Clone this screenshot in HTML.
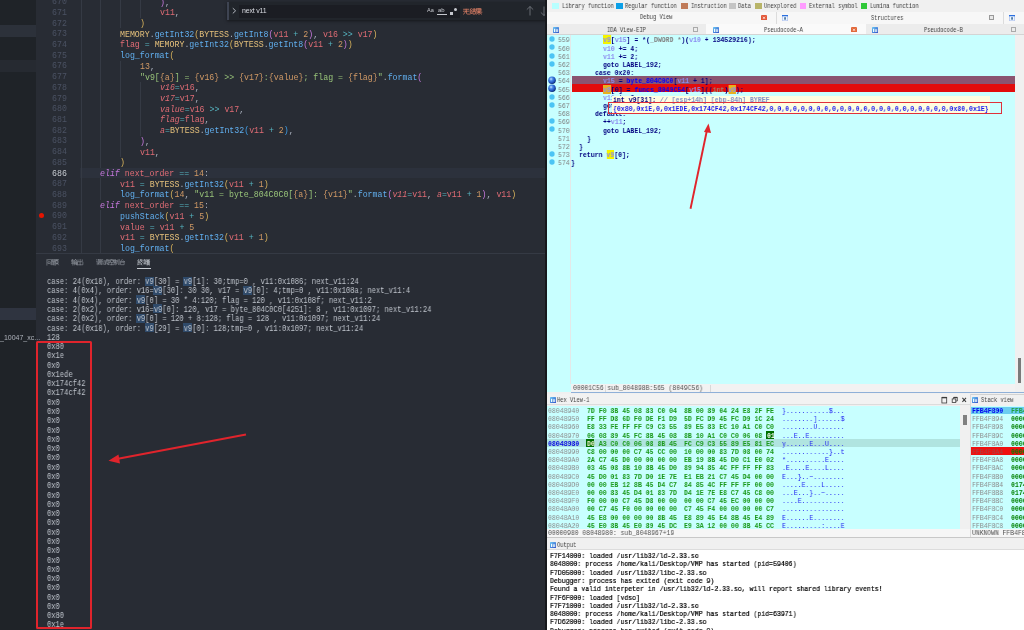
<!DOCTYPE html><html><head><meta charset="utf-8"><style>
*{margin:0;padding:0;box-sizing:border-box}
html,body{width:1024px;height:630px;overflow:hidden;background:#282c34}
body{position:relative;font-family:"Liberation Mono",monospace;-webkit-font-smoothing:antialiased}
.ln{will-change:transform}
.a{position:absolute}
.ln{position:absolute;white-space:pre;line-height:1}
.vc{font-size:8.25px;color:#abb2bf}
.it{font-style:italic}
.term{font-size:8.4px;color:#bfc4cc;transform:scaleX(0.85);transform-origin:0 0}
.ida{font-size:8px;color:#000080;transform:scaleX(0.815);transform-origin:0 0;font-weight:bold}
.nb{font-weight:normal}
.st{font-size:7px;color:#505050;transform:scaleX(0.91);transform-origin:0 0}
.lg{font-size:6.86px;color:#404040;transform:scaleX(0.787);transform-origin:0 0}
</style></head><body>
<div class="a" style="left:0;top:0;width:36px;height:630px;background:#1f2328"></div>
<div class="a" style="left:0;top:25px;width:36px;height:12px;background:#2c313a"></div>
<div class="a" style="left:0;top:60px;width:36px;height:12px;background:#262a31"></div>
<div class="a" style="left:0;top:308px;width:36px;height:11.5px;background:#2f3440"></div>
<div class="ln" style="left:0;top:334px;font-family:'Liberation Sans';font-size:7px;color:#aeb3bb">_10047_xc...</div>
<div class="a" style="left:36px;top:0;width:511px;height:253px;background:#282c34"></div>
<div class="a" style="left:80px;top:167.66px;width:467px;height:10.7px;background:#2c313c"></div>
<div class="a" style="left:80.6px;top:-3.76px;width:1px;height:10.81px;background:#353a44"></div>
<div class="a" style="left:100.4px;top:-3.76px;width:1px;height:10.81px;background:#353a44"></div>
<div class="a" style="left:120.2px;top:-3.76px;width:1px;height:10.81px;background:#353a44"></div>
<div class="a" style="left:140.0px;top:-3.76px;width:1px;height:10.81px;background:#353a44"></div>
<div class="a" style="left:80.6px;top:6.96px;width:1px;height:10.81px;background:#353a44"></div>
<div class="a" style="left:100.4px;top:6.96px;width:1px;height:10.81px;background:#353a44"></div>
<div class="a" style="left:120.2px;top:6.96px;width:1px;height:10.81px;background:#353a44"></div>
<div class="a" style="left:140.0px;top:6.96px;width:1px;height:10.81px;background:#353a44"></div>
<div class="a" style="left:80.6px;top:17.67px;width:1px;height:10.81px;background:#353a44"></div>
<div class="a" style="left:100.4px;top:17.67px;width:1px;height:10.81px;background:#353a44"></div>
<div class="a" style="left:120.2px;top:17.67px;width:1px;height:10.81px;background:#353a44"></div>
<div class="a" style="left:80.6px;top:28.38px;width:1px;height:10.81px;background:#353a44"></div>
<div class="a" style="left:100.4px;top:28.38px;width:1px;height:10.81px;background:#353a44"></div>
<div class="a" style="left:80.6px;top:39.09px;width:1px;height:10.81px;background:#353a44"></div>
<div class="a" style="left:100.4px;top:39.09px;width:1px;height:10.81px;background:#353a44"></div>
<div class="a" style="left:80.6px;top:49.80px;width:1px;height:10.81px;background:#353a44"></div>
<div class="a" style="left:100.4px;top:49.80px;width:1px;height:10.81px;background:#353a44"></div>
<div class="a" style="left:80.6px;top:60.50px;width:1px;height:10.81px;background:#353a44"></div>
<div class="a" style="left:100.4px;top:60.50px;width:1px;height:10.81px;background:#353a44"></div>
<div class="a" style="left:120.2px;top:60.50px;width:1px;height:10.81px;background:#353a44"></div>
<div class="a" style="left:80.6px;top:71.21px;width:1px;height:10.81px;background:#353a44"></div>
<div class="a" style="left:100.4px;top:71.21px;width:1px;height:10.81px;background:#353a44"></div>
<div class="a" style="left:120.2px;top:71.21px;width:1px;height:10.81px;background:#353a44"></div>
<div class="a" style="left:80.6px;top:81.92px;width:1px;height:10.81px;background:#353a44"></div>
<div class="a" style="left:100.4px;top:81.92px;width:1px;height:10.81px;background:#353a44"></div>
<div class="a" style="left:120.2px;top:81.92px;width:1px;height:10.81px;background:#353a44"></div>
<div class="a" style="left:140.0px;top:81.92px;width:1px;height:10.81px;background:#353a44"></div>
<div class="a" style="left:80.6px;top:92.64px;width:1px;height:10.81px;background:#353a44"></div>
<div class="a" style="left:100.4px;top:92.64px;width:1px;height:10.81px;background:#353a44"></div>
<div class="a" style="left:120.2px;top:92.64px;width:1px;height:10.81px;background:#353a44"></div>
<div class="a" style="left:140.0px;top:92.64px;width:1px;height:10.81px;background:#353a44"></div>
<div class="a" style="left:80.6px;top:103.34px;width:1px;height:10.81px;background:#353a44"></div>
<div class="a" style="left:100.4px;top:103.34px;width:1px;height:10.81px;background:#353a44"></div>
<div class="a" style="left:120.2px;top:103.34px;width:1px;height:10.81px;background:#353a44"></div>
<div class="a" style="left:140.0px;top:103.34px;width:1px;height:10.81px;background:#353a44"></div>
<div class="a" style="left:80.6px;top:114.05px;width:1px;height:10.81px;background:#353a44"></div>
<div class="a" style="left:100.4px;top:114.05px;width:1px;height:10.81px;background:#353a44"></div>
<div class="a" style="left:120.2px;top:114.05px;width:1px;height:10.81px;background:#353a44"></div>
<div class="a" style="left:140.0px;top:114.05px;width:1px;height:10.81px;background:#353a44"></div>
<div class="a" style="left:80.6px;top:124.77px;width:1px;height:10.81px;background:#353a44"></div>
<div class="a" style="left:100.4px;top:124.77px;width:1px;height:10.81px;background:#353a44"></div>
<div class="a" style="left:120.2px;top:124.77px;width:1px;height:10.81px;background:#353a44"></div>
<div class="a" style="left:140.0px;top:124.77px;width:1px;height:10.81px;background:#353a44"></div>
<div class="a" style="left:80.6px;top:135.48px;width:1px;height:10.81px;background:#353a44"></div>
<div class="a" style="left:100.4px;top:135.48px;width:1px;height:10.81px;background:#353a44"></div>
<div class="a" style="left:120.2px;top:135.48px;width:1px;height:10.81px;background:#353a44"></div>
<div class="a" style="left:80.6px;top:146.19px;width:1px;height:10.81px;background:#353a44"></div>
<div class="a" style="left:100.4px;top:146.19px;width:1px;height:10.81px;background:#353a44"></div>
<div class="a" style="left:120.2px;top:146.19px;width:1px;height:10.81px;background:#353a44"></div>
<div class="a" style="left:80.6px;top:156.90px;width:1px;height:10.81px;background:#353a44"></div>
<div class="a" style="left:100.4px;top:156.90px;width:1px;height:10.81px;background:#353a44"></div>
<div class="a" style="left:80.6px;top:167.61px;width:1px;height:10.81px;background:#353a44"></div>
<div class="a" style="left:80.6px;top:178.32px;width:1px;height:10.81px;background:#353a44"></div>
<div class="a" style="left:100.4px;top:178.32px;width:1px;height:10.81px;background:#353a44"></div>
<div class="a" style="left:80.6px;top:189.03px;width:1px;height:10.81px;background:#353a44"></div>
<div class="a" style="left:100.4px;top:189.03px;width:1px;height:10.81px;background:#353a44"></div>
<div class="a" style="left:80.6px;top:199.74px;width:1px;height:10.81px;background:#353a44"></div>
<div class="a" style="left:80.6px;top:210.45px;width:1px;height:10.81px;background:#353a44"></div>
<div class="a" style="left:100.4px;top:210.45px;width:1px;height:10.81px;background:#353a44"></div>
<div class="a" style="left:80.6px;top:221.16px;width:1px;height:10.81px;background:#353a44"></div>
<div class="a" style="left:100.4px;top:221.16px;width:1px;height:10.81px;background:#353a44"></div>
<div class="a" style="left:80.6px;top:231.87px;width:1px;height:10.81px;background:#353a44"></div>
<div class="a" style="left:100.4px;top:231.87px;width:1px;height:10.81px;background:#353a44"></div>
<div class="a" style="left:80.6px;top:242.58px;width:1px;height:10.81px;background:#353a44"></div>
<div class="a" style="left:100.4px;top:242.58px;width:1px;height:10.81px;background:#353a44"></div>
<div class="ln vc" style="right:957.5px;top:-1.80px;color:#4b5263">670</div>
<div class="ln vc" style="right:957.5px;top:8.91px;color:#4b5263">671</div>
<div class="ln vc" style="right:957.5px;top:19.62px;color:#4b5263">672</div>
<div class="ln vc" style="right:957.5px;top:30.33px;color:#4b5263">673</div>
<div class="ln vc" style="right:957.5px;top:41.04px;color:#4b5263">674</div>
<div class="ln vc" style="right:957.5px;top:51.75px;color:#4b5263">675</div>
<div class="ln vc" style="right:957.5px;top:62.46px;color:#4b5263">676</div>
<div class="ln vc" style="right:957.5px;top:73.17px;color:#4b5263">677</div>
<div class="ln vc" style="right:957.5px;top:83.88px;color:#4b5263">678</div>
<div class="ln vc" style="right:957.5px;top:94.59px;color:#4b5263">679</div>
<div class="ln vc" style="right:957.5px;top:105.30px;color:#4b5263">680</div>
<div class="ln vc" style="right:957.5px;top:116.01px;color:#4b5263">681</div>
<div class="ln vc" style="right:957.5px;top:126.72px;color:#4b5263">682</div>
<div class="ln vc" style="right:957.5px;top:137.43px;color:#4b5263">683</div>
<div class="ln vc" style="right:957.5px;top:148.14px;color:#4b5263">684</div>
<div class="ln vc" style="right:957.5px;top:158.85px;color:#4b5263">685</div>
<div class="ln vc" style="right:957.5px;top:169.56px;color:#c8ccd2">686</div>
<div class="ln vc" style="right:957.5px;top:180.27px;color:#4b5263">687</div>
<div class="ln vc" style="right:957.5px;top:190.98px;color:#4b5263">688</div>
<div class="ln vc" style="right:957.5px;top:201.69px;color:#4b5263">689</div>
<div class="ln vc" style="right:957.5px;top:212.40px;color:#4b5263">690</div>
<div class="ln vc" style="right:957.5px;top:223.11px;color:#4b5263">691</div>
<div class="ln vc" style="right:957.5px;top:233.82px;color:#4b5263">692</div>
<div class="ln vc" style="right:957.5px;top:244.53px;color:#4b5263">693</div>
<div class="ln vc" style="left:159.80px;top:-1.40px"><span style="color:#c678dd">)</span><span style="color:#abb2bf">,</span></div>
<div class="ln vc" style="left:159.80px;top:9.31px"><span style="color:#e06c75">v11</span><span style="color:#abb2bf">,</span></div>
<div class="ln vc" style="left:140.00px;top:20.02px"><span style="color:#d8b35c">)</span></div>
<div class="ln vc" style="left:120.20px;top:30.73px"><span style="color:#e5c07b">MEMORY</span><span style="color:#abb2bf">.</span><span style="color:#61afef">getInt32</span><span style="color:#d8b35c">(</span><span style="color:#e5c07b">BYTESS</span><span style="color:#abb2bf">.</span><span style="color:#61afef">getInt8</span><span style="color:#c678dd">(</span><span style="color:#e06c75">v11</span><span style="color:#56b6c2"> + </span><span style="color:#d19a66">2</span><span style="color:#c678dd">)</span><span style="color:#abb2bf">, </span><span style="color:#e06c75">v16</span><span style="color:#56b6c2"> &gt;&gt; </span><span style="color:#e06c75">v17</span><span style="color:#d8b35c">)</span></div>
<div class="ln vc" style="left:120.20px;top:41.44px"><span style="color:#e06c75">flag</span><span style="color:#56b6c2"> = </span><span style="color:#e5c07b">MEMORY</span><span style="color:#abb2bf">.</span><span style="color:#61afef">getInt32</span><span style="color:#d8b35c">(</span><span style="color:#e5c07b">BYTESS</span><span style="color:#abb2bf">.</span><span style="color:#61afef">getInt8</span><span style="color:#c678dd">(</span><span style="color:#e06c75">v11</span><span style="color:#56b6c2"> + </span><span style="color:#d19a66">2</span><span style="color:#c678dd">)</span><span style="color:#d8b35c">)</span></div>
<div class="ln vc" style="left:120.20px;top:52.15px"><span style="color:#61afef">log_format</span><span style="color:#d8b35c">(</span></div>
<div class="ln vc" style="left:140.00px;top:62.86px"><span style="color:#d19a66">13</span><span style="color:#abb2bf">,</span></div>
<div class="ln vc" style="left:140.00px;top:73.57px"><span style="color:#98c379">&quot;v9[</span><span style="color:#d19a66">{a}</span><span style="color:#98c379">] = </span><span style="color:#d19a66">{v16}</span><span style="color:#98c379"> &gt;&gt; </span><span style="color:#d19a66">{v17}</span><span style="color:#98c379">:</span><span style="color:#d19a66">{value}</span><span style="color:#98c379">; flag = </span><span style="color:#d19a66">{flag}</span><span style="color:#98c379">&quot;</span><span style="color:#abb2bf">.</span><span style="color:#61afef">format</span><span style="color:#c678dd">(</span></div>
<div class="ln vc" style="left:159.80px;top:84.28px"><span style="color:#e06c75;font-style:italic">v16</span><span style="color:#56b6c2">=</span><span style="color:#e06c75">v16</span><span style="color:#abb2bf">,</span></div>
<div class="ln vc" style="left:159.80px;top:94.99px"><span style="color:#e06c75;font-style:italic">v17</span><span style="color:#56b6c2">=</span><span style="color:#e06c75">v17</span><span style="color:#abb2bf">,</span></div>
<div class="ln vc" style="left:159.80px;top:105.70px"><span style="color:#e06c75;font-style:italic">value</span><span style="color:#56b6c2">=</span><span style="color:#e06c75">v16</span><span style="color:#56b6c2"> &gt;&gt; </span><span style="color:#e06c75">v17</span><span style="color:#abb2bf">,</span></div>
<div class="ln vc" style="left:159.80px;top:116.41px"><span style="color:#e06c75;font-style:italic">flag</span><span style="color:#56b6c2">=</span><span style="color:#e06c75">flag</span><span style="color:#abb2bf">,</span></div>
<div class="ln vc" style="left:159.80px;top:127.12px"><span style="color:#e06c75;font-style:italic">a</span><span style="color:#56b6c2">=</span><span style="color:#e5c07b">BYTESS</span><span style="color:#abb2bf">.</span><span style="color:#61afef">getInt32</span><span style="color:#3d9ee8">(</span><span style="color:#e06c75">v11</span><span style="color:#56b6c2"> + </span><span style="color:#d19a66">2</span><span style="color:#3d9ee8">)</span><span style="color:#abb2bf">,</span></div>
<div class="ln vc" style="left:140.00px;top:137.83px"><span style="color:#c678dd">)</span><span style="color:#abb2bf">,</span></div>
<div class="ln vc" style="left:140.00px;top:148.54px"><span style="color:#e06c75">v11</span><span style="color:#abb2bf">,</span></div>
<div class="ln vc" style="left:120.20px;top:159.25px"><span style="color:#d8b35c">)</span></div>
<div class="ln vc" style="left:100.40px;top:169.96px"><span style="color:#c678dd;font-style:italic">elif</span><span style="color:#abb2bf"> </span><span style="color:#e06c75">next_order</span><span style="color:#56b6c2"> == </span><span style="color:#d19a66">14</span><span style="color:#abb2bf">:</span></div>
<div class="ln vc" style="left:120.20px;top:180.67px"><span style="color:#e06c75">v11</span><span style="color:#56b6c2"> = </span><span style="color:#e5c07b">BYTESS</span><span style="color:#abb2bf">.</span><span style="color:#61afef">getInt32</span><span style="color:#d8b35c">(</span><span style="color:#e06c75">v11</span><span style="color:#56b6c2"> + </span><span style="color:#d19a66">1</span><span style="color:#d8b35c">)</span></div>
<div class="ln vc" style="left:120.20px;top:191.38px"><span style="color:#61afef">log_format</span><span style="color:#d8b35c">(</span><span style="color:#d19a66">14</span><span style="color:#abb2bf">, </span><span style="color:#98c379">&quot;v11 = byte_804C0C0[</span><span style="color:#d19a66">{a}</span><span style="color:#98c379">]: </span><span style="color:#d19a66">{v11}</span><span style="color:#98c379">&quot;</span><span style="color:#abb2bf">.</span><span style="color:#61afef">format</span><span style="color:#c678dd">(</span><span style="color:#e06c75;font-style:italic">v11</span><span style="color:#56b6c2">=</span><span style="color:#e06c75">v11</span><span style="color:#abb2bf">, </span><span style="color:#e06c75;font-style:italic">a</span><span style="color:#56b6c2">=</span><span style="color:#e06c75">v11</span><span style="color:#56b6c2"> + </span><span style="color:#d19a66">1</span><span style="color:#c678dd">)</span><span style="color:#abb2bf">, </span><span style="color:#e06c75">v11</span><span style="color:#d8b35c">)</span></div>
<div class="ln vc" style="left:100.40px;top:202.09px"><span style="color:#c678dd;font-style:italic">elif</span><span style="color:#abb2bf"> </span><span style="color:#e06c75">next_order</span><span style="color:#56b6c2"> == </span><span style="color:#d19a66">15</span><span style="color:#abb2bf">:</span></div>
<div class="ln vc" style="left:120.20px;top:212.80px"><span style="color:#61afef">pushStack</span><span style="color:#d8b35c">(</span><span style="color:#e06c75">v11</span><span style="color:#56b6c2"> + </span><span style="color:#d19a66">5</span><span style="color:#d8b35c">)</span></div>
<div class="ln vc" style="left:120.20px;top:223.51px"><span style="color:#e06c75">value</span><span style="color:#56b6c2"> = </span><span style="color:#e06c75">v11</span><span style="color:#56b6c2"> + </span><span style="color:#d19a66">5</span></div>
<div class="ln vc" style="left:120.20px;top:234.22px"><span style="color:#e06c75">v11</span><span style="color:#56b6c2"> = </span><span style="color:#e5c07b">BYTESS</span><span style="color:#abb2bf">.</span><span style="color:#61afef">getInt32</span><span style="color:#d8b35c">(</span><span style="color:#e06c75">v11</span><span style="color:#56b6c2"> + </span><span style="color:#d19a66">1</span><span style="color:#d8b35c">)</span></div>
<div class="ln vc" style="left:120.20px;top:244.93px"><span style="color:#61afef">log_format</span><span style="color:#d8b35c">(</span></div>
<div class="a" style="left:38.5px;top:213.2px;width:5px;height:5px;border-radius:50%;background:#e51400"></div>
<div class="a" style="left:227px;top:1.5px;width:320px;height:18.5px;background:#21252b;box-shadow:0 1px 3px rgba(0,0,0,.5)"></div>
<div class="a" style="left:227px;top:1.5px;width:2px;height:18.5px;background:#3e4452"></div>
<svg class="a" style="left:231px;top:7px" width="7" height="8"><polyline points="1.8,1.2 4.6,3.8 1.8,6.4" fill="none" stroke="#c0c4cc" stroke-width="0.9"/></svg>
<div class="a" style="left:239px;top:4.5px;width:221px;height:13px;background:#1b1d23"></div>
<div class="ln" style="left:242px;top:7px;font-family:'Liberation Sans';font-size:7px;color:#d7dae0;letter-spacing:-0.2px">next v11</div>
<div class="ln" style="left:427px;top:8px;font-family:'Liberation Sans';font-size:5.5px;color:#c5c8ce">Aa</div>
<div class="ln" style="left:437.5px;top:7px;font-family:'Liberation Sans';font-size:6px;color:#c5c8ce">ab</div>
<div class="a" style="left:437px;top:14px;width:10px;height:0.8px;background:#c5c8ce"></div>
<div class="a" style="left:450px;top:12px;width:2.5px;height:2.5px;background:#c5c8ce"></div><div class="a" style="left:454px;top:8px;width:3px;height:3px;background:#c5c8ce;border-radius:50%"></div>
<svg class="a" style="left:462.8px;top:7.6px;opacity:1" width="21.2" height="7.4" viewBox="0 0 33.13 11.56"><g fill="none" stroke="#d27a62" stroke-width="1.25" stroke-linecap="square"><path transform="translate(0.00,0)" d="M1,2H9M0.5,5H9.5M5,2V5M4.6,5L1,9.6M5.6,5V9Q5.6,9.6 9.6,9.6"/><path transform="translate(10.00,0)" d="M3,0.5L1,3.5L3.5,3.5L1,7L4,6M1,9.3L4,8.3M5,2H9.8M7.4,0.3V4.5M5.5,4.5H9.3M5.5,6V9.5H9.3V6Z"/><path transform="translate(20.00,0)" d="M2,0.5H8V5H2ZM2,2.75H8M5,0.5V5M0.5,6.5H9.5M5,5V10M5,6.5L1,9.5M5,6.5L9,9.5"/></g></svg>
<svg class="a" style="left:525px;top:5px" width="24" height="12"><path d="M5,1.5V10.5M1.8,4.6L5,1.5L8.2,4.6M19,1.5V10.5M15.8,7.4L19,10.5L22.2,7.4" fill="none" stroke="#7d8189" stroke-width="0.75"/></svg>
<div class="a" style="left:36px;top:253px;width:511px;height:1px;background:#353a44"></div>
<svg class="a" style="left:46px;top:258.7px;opacity:1" width="14.6" height="7.1" viewBox="0 0 23.93 11.64"><g fill="none" stroke="#8f949c" stroke-width="1.0" stroke-linecap="square"><path transform="translate(0.00,0)" d="M1.3,0.3L2.5,1.8M1.5,2.5V10M3.5,1H9V9.5L8,9M4,4.5H7V7.5H4Z"/><path transform="translate(10.33,0)" d="M0.5,0.5H4.5V4H0.5ZM0.5,2.25H4.5M0,5H5M2.5,5V9M2.5,7H4.5M1,6.5L0.5,9.5Q4,9.5 5,9.8M5.5,1H10M7.5,1L7,2.5M6,2.5H9.5V7.5H6ZM7.75,2.5V7.5M7,7.5L5.5,9.5M8.5,7.5L10,9.5"/></g></svg>
<svg class="a" style="left:71px;top:258.7px;opacity:1" width="14.2" height="7.1" viewBox="0 0 23.28 11.64"><g fill="none" stroke="#8f949c" stroke-width="1.0" stroke-linecap="square"><path transform="translate(0.00,0)" d="M0.5,2H4.5M2.5,0.5L1,5H4.5M3,3V10M0.5,7H4.5M7.5,0.5L5,3.5M7.5,0.5L10,3.5M6.5,3.5H8.5M5.5,5V9.5M5.5,5H8V9M5.5,7H8M9,5V9M10,4.5V10"/><path transform="translate(10.00,0)" d="M5,0.5V9.5M1.5,1.5V4.5H8.5V1.5M0.5,5.5V9.5H9.5V5.5"/></g></svg>
<svg class="a" style="left:96px;top:258.7px;opacity:1" width="31.2" height="7.0" viewBox="0 0 52.08 11.67"><g fill="none" stroke="#8f949c" stroke-width="1.0" stroke-linecap="square"><path transform="translate(0.00,0)" d="M1,0.5L2,1.5M0.5,3.5H2V9L3,8M4,1V8L3.5,9.5M4,1H9.5V9.5L8.5,9M5,3H8.5M6.75,2V5M5.5,4.5H8M5.5,6H8V8.5H5.5Z"/><path transform="translate(9.75,0)" d="M1,0.5L2,1.5M0.5,3.5H2V9L3,8M4,3H10M8,0.5Q8.3,7 10,9.5M9,0.5L9.7,1.5M4.5,5H7.5M6,5V8.5M4,9L7.5,8"/><path transform="translate(19.50,0)" d="M0.5,3H3.5M2,0.5V9.5L1,9M0.5,7L3.5,5.5M6.75,0.2V1.2M4,3V1.2H9.5V3M5.5,2.5L4.5,4.5M8,2.5L9.5,4.5M5,6H8.5M6.75,6V9.5M4,9.5H9.5"/><path transform="translate(29.25,0)" d="M1,1L0.5,2.5M0.5,2.5H6M3,0.5V9.5M0,4.5H6.5M1,6V9M1,6H5V8.5M7.5,1.5V7.5M9.5,0.5V9.5L8.5,9"/><path transform="translate(39.00,0)" d="M5,0.5L1.5,4.5H8.5M7,3L8.5,4.5M2,6V9.5H8V6Z"/></g></svg>
<svg class="a" style="left:137px;top:258.7px;opacity:1" width="15.0" height="7.1" viewBox="0 0 24.59 11.64"><g fill="none" stroke="#d0d4da" stroke-width="1.0" stroke-linecap="square"><path transform="translate(0.00,0)" d="M3,0.5L1,3.5L3.5,3.5L1,7L4,6M1,9.3L4,8.3M6.5,0.5L4.5,3.5M6,1.5H9L5,6M6.5,3L10,6M6.5,7L7.5,7.5M6,8.5L8,9.5"/><path transform="translate(10.66,0)" d="M2,0.5V1.5M0.5,2H4M1,3.5L1.5,7M3.5,3.5L3,7M0.5,8H4.5M7.5,0.5V2.5M5.5,1V2.5H9.5V1M5,4H10M6,5V10M6,5H9.5V10M7,6V9M8.5,6V9"/></g></svg>
<div class="a" style="left:137px;top:268px;width:14px;height:1px;background:#c8ccd2"></div>
<div class="a" style="left:144.64px;top:276.60px;width:9.16px;height:9px;background:#2f4a6a"></div>
<div class="a" style="left:183.16px;top:276.60px;width:9.16px;height:9px;background:#2f4a6a"></div>
<div class="ln term" style="left:46.5px;top:278.10px">case: 24(0x18), order: v9[30] = v9[1]: 30;tmp=0 , v11:0x1086; next_v11:24</div>
<div class="a" style="left:153.20px;top:285.88px;width:9.16px;height:9px;background:#2f4a6a"></div>
<div class="a" style="left:243.08px;top:285.88px;width:9.16px;height:9px;background:#2f4a6a"></div>
<div class="ln term" style="left:46.5px;top:287.38px">case: 4(0x4), order: v16=v9[30]: 30 30, v17 = v9[0]: 4;tmp=0 , v11:0x108a; next_v11:4</div>
<div class="a" style="left:136.08px;top:295.16px;width:9.16px;height:9px;background:#2f4a6a"></div>
<div class="ln term" style="left:46.5px;top:296.66px">case: 4(0x4), order: v9[0] = 30 * 4:120; flag = 120 , v11:0x108f; next_v11:2</div>
<div class="a" style="left:153.20px;top:304.44px;width:9.16px;height:9px;background:#2f4a6a"></div>
<div class="ln term" style="left:46.5px;top:305.94px">case: 2(0x2), order: v16=v9[0]: 120, v17 = byte_804C0C0[4251]: 8 , v11:0x1097; next_v11:24</div>
<div class="a" style="left:136.08px;top:313.72px;width:9.16px;height:9px;background:#2f4a6a"></div>
<div class="ln term" style="left:46.5px;top:315.22px">case: 2(0x2), order: v9[0] = 120 + 8:128; flag = 128 , v11:0x1097; next_v11:24</div>
<div class="a" style="left:144.64px;top:323.00px;width:9.16px;height:9px;background:#2f4a6a"></div>
<div class="a" style="left:183.16px;top:323.00px;width:9.16px;height:9px;background:#2f4a6a"></div>
<div class="ln term" style="left:46.5px;top:324.50px">case: 24(0x18), order: v9[29] = v9[0]: 128;tmp=0 , v11:0x1097; next_v11:24</div>
<div class="ln term" style="left:46.5px;top:333.78px">128</div>
<div class="ln term" style="left:46.5px;top:343.06px">0x80</div>
<div class="ln term" style="left:46.5px;top:352.34px">0x1e</div>
<div class="ln term" style="left:46.5px;top:361.62px">0x0</div>
<div class="ln term" style="left:46.5px;top:370.90px">0x1ede</div>
<div class="ln term" style="left:46.5px;top:380.18px">0x174cf42</div>
<div class="ln term" style="left:46.5px;top:389.46px">0x174cf42</div>
<div class="ln term" style="left:46.5px;top:398.74px">0x0</div>
<div class="ln term" style="left:46.5px;top:408.02px">0x0</div>
<div class="ln term" style="left:46.5px;top:417.30px">0x0</div>
<div class="ln term" style="left:46.5px;top:426.58px">0x0</div>
<div class="ln term" style="left:46.5px;top:435.86px">0x0</div>
<div class="ln term" style="left:46.5px;top:445.14px">0x0</div>
<div class="ln term" style="left:46.5px;top:454.42px">0x0</div>
<div class="ln term" style="left:46.5px;top:463.70px">0x0</div>
<div class="ln term" style="left:46.5px;top:472.98px">0x0</div>
<div class="ln term" style="left:46.5px;top:482.26px">0x0</div>
<div class="ln term" style="left:46.5px;top:491.54px">0x0</div>
<div class="ln term" style="left:46.5px;top:500.82px">0x0</div>
<div class="ln term" style="left:46.5px;top:510.10px">0x0</div>
<div class="ln term" style="left:46.5px;top:519.38px">0x0</div>
<div class="ln term" style="left:46.5px;top:528.66px">0x0</div>
<div class="ln term" style="left:46.5px;top:537.94px">0x0</div>
<div class="ln term" style="left:46.5px;top:547.22px">0x0</div>
<div class="ln term" style="left:46.5px;top:556.50px">0x0</div>
<div class="ln term" style="left:46.5px;top:565.78px">0x0</div>
<div class="ln term" style="left:46.5px;top:575.06px">0x0</div>
<div class="ln term" style="left:46.5px;top:584.34px">0x0</div>
<div class="ln term" style="left:46.5px;top:593.62px">0x0</div>
<div class="ln term" style="left:46.5px;top:602.90px">0x0</div>
<div class="ln term" style="left:46.5px;top:612.18px">0x80</div>
<div class="ln term" style="left:46.5px;top:621.46px">0x1e</div>
<div class="a" style="left:36px;top:340.8px;width:56px;height:288.5px;border:2px solid #e0242c;border-radius:1.5px"></div>
<svg class="a" style="left:0;top:0" width="547" height="630"><line x1="246" y1="434.5" x2="114" y2="459.5" stroke="#e0242c" stroke-width="2.1"/><polygon points="108.5,460.8 118.5,454.6 120,463.6" fill="#e0242c"/></svg>
<div class="a" style="left:545px;top:0;width:2px;height:630px;background:#16181c"></div>
<div class="a" style="left:547px;top:0;width:477px;height:630px;background:#f0f0f0"></div>
<div class="a" style="left:552.3px;top:2.6px;width:6.5px;height:6px;background:#b8ffff"></div>
<div class="ln lg" style="left:561.5px;top:3px">Library function</div>
<div class="a" style="left:616px;top:2.6px;width:6.5px;height:6px;background:#0ca0e8"></div>
<div class="ln lg" style="left:625.2px;top:3px">Regular function</div>
<div class="a" style="left:681.3px;top:2.6px;width:6.5px;height:6px;background:#c07a58"></div>
<div class="ln lg" style="left:690.5px;top:3px">Instruction</div>
<div class="a" style="left:729px;top:2.6px;width:6.5px;height:6px;background:#c4c4c4"></div>
<div class="ln lg" style="left:738.2px;top:3px">Data</div>
<div class="a" style="left:755px;top:2.6px;width:6.5px;height:6px;background:#b8b468"></div>
<div class="ln lg" style="left:764.2px;top:3px">Unexplored</div>
<div class="a" style="left:799.7px;top:2.6px;width:6.5px;height:6px;background:#ff9cff"></div>
<div class="ln lg" style="left:808.9px;top:3px">External symbol</div>
<div class="a" style="left:860.9px;top:2.6px;width:6.5px;height:6px;background:#30c838"></div>
<div class="ln lg" style="left:870.1px;top:3px">Lumina function</div>
<div class="a" style="left:547px;top:11.8px;width:477px;height:11.8px;background:#f7f7f7"></div>
<div class="ln lg" style="left:640px;top:14.1px">Debug View</div>
<svg class="a" style="left:761px;top:14.7px" width="6" height="5.5"><rect x="0" y="0" width="6" height="5.5" rx="1" fill="#e2583a"/><path d="M2,1.8L4,3.8M4,1.8L2,3.8" stroke="#fde8e0" stroke-width="0.9"/></svg>
<div class="a" style="left:775.5px;top:11.8px;width:1px;height:11.8px;background:#dcdcdc"></div>
<svg class="a" style="left:781.5px;top:15.0px" width="6" height="6"><rect x="0" y="0" width="6" height="6" rx="0.6" fill="#b8c8f0"/><rect x="0" y="0" width="6" height="1.3" fill="#2a70e0"/><rect x="0.9" y="1.5" width="4.2" height="3.8" fill="#eaf8ff"/><rect x="2.2" y="2.2" width="1.7" height="2.5" fill="#4a70a0"/></svg>
<div class="ln lg" style="left:871px;top:15px;">Structures</div>
<div class="a" style="left:989px;top:15.3px;width:5px;height:5px;border:1px solid #999;background:#e8e8e8"></div>
<div class="a" style="left:1003px;top:11.8px;width:1px;height:11.8px;background:#dcdcdc"></div>
<svg class="a" style="left:1009.0px;top:15.0px" width="6" height="6"><rect x="0" y="0" width="6" height="6" rx="0.6" fill="#b8c8f0"/><rect x="0" y="0" width="6" height="1.3" fill="#2a70e0"/><rect x="0.9" y="1.5" width="4.2" height="3.8" fill="#eaf8ff"/><rect x="2.2" y="2.2" width="1.7" height="2.5" fill="#4a70a0"/></svg>
<div class="a" style="left:547px;top:23.6px;width:477px;height:11px;background:#ececec"></div>
<div class="a" style="left:705.5px;top:23.6px;width:160px;height:11px;background:#fafafa"></div>
<div class="a" style="left:547px;top:34px;width:477px;height:1px;background:#d4d4d4"></div>
<svg class="a" style="left:553.0px;top:26.5px" width="6" height="6"><defs><linearGradient id="ig" x1="0" y1="0" x2="1" y2="1"><stop offset="0" stop-color="#6cc8f4"/><stop offset="1" stop-color="#3050c8"/></linearGradient></defs><rect x="0" y="0" width="6" height="6" rx="0.6" fill="url(#ig)"/><rect x="1" y="1.8" width="1.2" height="3.2" fill="#f0ffff"/><rect x="2.8" y="2.2" width="2.4" height="2.8" fill="#c0d8f0"/></svg>
<div class="ln lg" style="left:607px;top:26.5px;">IDA View-EIP</div>
<div class="a" style="left:692.5px;top:26.8px;width:5px;height:5px;border:1px solid #aaa"></div>
<svg class="a" style="left:712.5px;top:26.5px" width="6" height="6"><defs><linearGradient id="ig" x1="0" y1="0" x2="1" y2="1"><stop offset="0" stop-color="#6cc8f4"/><stop offset="1" stop-color="#3050c8"/></linearGradient></defs><rect x="0" y="0" width="6" height="6" rx="0.6" fill="url(#ig)"/><rect x="1" y="1.8" width="1.2" height="3.2" fill="#f0ffff"/><rect x="2.8" y="2.2" width="2.4" height="2.8" fill="#c0d8f0"/></svg>
<div class="ln lg" style="left:764px;top:26.5px;">Pseudocode-A</div>
<svg class="a" style="left:851px;top:26.5px" width="6" height="5.5"><rect x="0" y="0" width="6" height="5.5" rx="1" fill="#e2683a"/><path d="M2,1.8L4,3.8M4,1.8L2,3.8" stroke="#fde8e0" stroke-width="0.9"/></svg>
<svg class="a" style="left:871.5px;top:26.5px" width="6" height="6"><defs><linearGradient id="ig" x1="0" y1="0" x2="1" y2="1"><stop offset="0" stop-color="#6cc8f4"/><stop offset="1" stop-color="#3050c8"/></linearGradient></defs><rect x="0" y="0" width="6" height="6" rx="0.6" fill="url(#ig)"/><rect x="1" y="1.8" width="1.2" height="3.2" fill="#f0ffff"/><rect x="2.8" y="2.2" width="2.4" height="2.8" fill="#c0d8f0"/></svg>
<div class="ln lg" style="left:924px;top:26.5px;">Pseudocode-B</div>
<div class="a" style="left:1010.5px;top:26.8px;width:5px;height:5px;border:1px solid #aaa"></div>
<div class="a" style="left:547px;top:35px;width:467.5px;height:349px;background:#c8ffff"></div>
<div class="a" style="left:570.2px;top:35px;width:1.3px;height:349px;background:#e4e8e8"></div>
<div class="a" style="left:1014.5px;top:35px;width:9.5px;height:357px;background:#f0f0f0"></div>
<div class="a" style="left:1017.5px;top:358px;width:3.5px;height:25px;background:#7a7a7a"></div>
<div class="a" style="left:571.5px;top:76px;width:443px;height:8px;background:#8a5470"></div>
<div class="a" style="left:571.5px;top:84px;width:443px;height:8px;background:#e20c0c"></div>
<svg class="a" style="left:547px;top:35.10px" width="10" height="8"><circle cx="5" cy="4" r="2.65" fill="#4cc4f4"/></svg>
<div class="ln ida" style="left:557.5px;top:36.45px;color:#808080;font-weight:normal">559</div>
<div class="ln ida" style="left:602.60px;top:36.45px"><span style="color:#8c8cf0;background:#f4f400">v9</span><span style="color:#000080">[</span><span style="color:#8c8cf0">v15</span><span style="color:#000080">] = *(</span><span style="color:#808080">_DWORD *</span><span style="color:#000080">)(</span><span style="color:#8c8cf0">v10</span><span style="color:#000080"> + 134529216);</span></div>
<svg class="a" style="left:547px;top:43.30px" width="10" height="8"><circle cx="5" cy="4" r="2.65" fill="#4cc4f4"/></svg>
<div class="ln ida" style="left:557.5px;top:44.65px;color:#808080;font-weight:normal">560</div>
<div class="ln ida" style="left:602.60px;top:44.65px"><span style="color:#8c8cf0">v10</span><span style="color:#000080"> += 4;</span></div>
<svg class="a" style="left:547px;top:51.50px" width="10" height="8"><circle cx="5" cy="4" r="2.65" fill="#4cc4f4"/></svg>
<div class="ln ida" style="left:557.5px;top:52.85px;color:#808080;font-weight:normal">561</div>
<div class="ln ida" style="left:602.60px;top:52.85px"><span style="color:#8c8cf0">v11</span><span style="color:#000080"> += 2;</span></div>
<svg class="a" style="left:547px;top:59.70px" width="10" height="8"><circle cx="5" cy="4" r="2.65" fill="#4cc4f4"/></svg>
<div class="ln ida" style="left:557.5px;top:61.05px;color:#808080;font-weight:normal">562</div>
<div class="ln ida" style="left:602.60px;top:61.05px"><span style="color:#000080">goto LABEL_192;</span></div>
<div class="ln ida" style="left:557.5px;top:69.25px;color:#808080;font-weight:normal">563</div>
<div class="ln ida" style="left:594.77px;top:69.25px"><span style="color:#000080">case 0x20:</span></div>
<svg class="a" style="left:547px;top:75.90px" width="10" height="8.4"><defs><radialGradient id="sg" cx="0.38" cy="0.35" r="0.65"><stop offset="0" stop-color="#c8e4ff"/><stop offset="0.35" stop-color="#4a8ae8"/><stop offset="0.8" stop-color="#1c4cb8"/><stop offset="1" stop-color="#0c2a70"/></radialGradient></defs><circle cx="5" cy="4.2" r="3.8" fill="url(#sg)"/></svg>
<div class="ln ida" style="left:557.5px;top:77.45px;color:#808080;font-weight:normal">564</div>
<div class="ln ida" style="left:602.60px;top:77.45px"><span style="color:#8c8cf0">v15</span><span style="color:#000080"> = </span><span style="color:#0000ff">byte_804C0C0</span><span style="color:#000080">[</span><span style="color:#8c8cf0">v11</span><span style="color:#000080"> + 1];</span></div>
<svg class="a" style="left:547px;top:84.10px" width="10" height="8.4"><defs><radialGradient id="sg" cx="0.38" cy="0.35" r="0.65"><stop offset="0" stop-color="#c8e4ff"/><stop offset="0.35" stop-color="#4a8ae8"/><stop offset="0.8" stop-color="#1c4cb8"/><stop offset="1" stop-color="#0c2a70"/></radialGradient></defs><circle cx="5" cy="4.2" r="3.8" fill="url(#sg)"/></svg>
<div class="ln ida" style="left:557.5px;top:85.65px;color:#808080;font-weight:normal">565</div>
<div class="ln ida" style="left:602.60px;top:85.65px"><span style="color:#8c8cf0;background:#e8b020">v9</span><span style="color:#000080">[0] = </span><span style="color:#0000ff">funcs_8049C54</span><span style="color:#000080">[</span><span style="color:#8c8cf0">v15</span><span style="color:#000080">]((</span><span style="color:#a08070">int</span><span style="color:#000080">)</span><span style="color:#8c8cf0;background:#e8b020">v9</span><span style="color:#000080">);</span></div>
<svg class="a" style="left:547px;top:92.50px" width="10" height="8"><circle cx="5" cy="4" r="2.65" fill="#4cc4f4"/></svg>
<div class="ln ida" style="left:557.5px;top:93.85px;color:#808080;font-weight:normal">566</div>
<div class="ln ida" style="left:602.60px;top:93.85px"><span style="color:#8c8cf0">v11</span><span style="color:#000080"> += 2;</span></div>
<svg class="a" style="left:547px;top:100.70px" width="10" height="8"><circle cx="5" cy="4" r="2.65" fill="#4cc4f4"/></svg>
<div class="ln ida" style="left:557.5px;top:102.05px;color:#808080;font-weight:normal">567</div>
<div class="ln ida" style="left:602.60px;top:102.05px"><span style="color:#000080">goto LABEL_192;</span></div>
<div class="ln ida" style="left:557.5px;top:110.25px;color:#808080;font-weight:normal">568</div>
<div class="ln ida" style="left:594.77px;top:110.25px"><span style="color:#000080">default:</span></div>
<svg class="a" style="left:547px;top:117.10px" width="10" height="8"><circle cx="5" cy="4" r="2.65" fill="#4cc4f4"/></svg>
<div class="ln ida" style="left:557.5px;top:118.45px;color:#808080;font-weight:normal">569</div>
<div class="ln ida" style="left:602.60px;top:118.45px"><span style="color:#000080">++</span><span style="color:#8c8cf0">v11</span><span style="color:#000080">;</span></div>
<svg class="a" style="left:547px;top:125.30px" width="10" height="8"><circle cx="5" cy="4" r="2.65" fill="#4cc4f4"/></svg>
<div class="ln ida" style="left:557.5px;top:126.65px;color:#808080;font-weight:normal">570</div>
<div class="ln ida" style="left:602.60px;top:126.65px"><span style="color:#000080">goto LABEL_192;</span></div>
<div class="ln ida" style="left:557.5px;top:134.85px;color:#808080;font-weight:normal">571</div>
<div class="ln ida" style="left:586.95px;top:134.85px"><span style="color:#000080">}</span></div>
<div class="ln ida" style="left:557.5px;top:143.05px;color:#808080;font-weight:normal">572</div>
<div class="ln ida" style="left:579.12px;top:143.05px"><span style="color:#000080">}</span></div>
<svg class="a" style="left:547px;top:149.90px" width="10" height="8"><circle cx="5" cy="4" r="2.65" fill="#4cc4f4"/></svg>
<div class="ln ida" style="left:557.5px;top:151.25px;color:#808080;font-weight:normal">573</div>
<div class="ln ida" style="left:579.12px;top:151.25px"><span style="color:#000080">return </span><span style="color:#8c8cf0;background:#f4f400">v9</span><span style="color:#000080">[0];</span></div>
<svg class="a" style="left:547px;top:158.10px" width="10" height="8"><circle cx="5" cy="4" r="2.65" fill="#4cc4f4"/></svg>
<div class="ln ida" style="left:557.5px;top:159.45px;color:#808080;font-weight:normal">574</div>
<div class="ln ida" style="left:571.30px;top:159.45px"><span style="color:#000080">}</span></div>
<div class="a" style="left:612px;top:96px;width:378px;height:17.5px;background:#fffde0"></div>
<div class="ln ida" style="left:613px;top:96.3px;color:#000080">int v9[31]; <span style="color:#8090c8">// [esp+14h] [ebp-84h] BYREF</span></div>
<div class="ln ida" style="left:613px;top:105px;color:#1818f0;font-weight:bold">{0x80,0x1E,0,0x1EDE,0x174CF42,0x174CF42,0,0,0,0,0,0,0,0,0,0,0,0,0,0,0,0,0,0,0,0,0,0,0,0x80,0x1E}</div>
<div class="a" style="left:607.5px;top:102.3px;width:394px;height:12px;border:1.3px solid #e0303a"></div>
<svg class="a" style="left:547px;top:0" width="477" height="630"><line x1="143.5" y1="208.8" x2="160" y2="130" stroke="#e0242c" stroke-width="1.9"/><polygon points="161.5,123.5 157,132 164,133" fill="#e0242c"/></svg>
<div class="a" style="left:547px;top:383.6px;width:24px;height:8.6px;background:#c8ffff"></div>
<div class="a" style="left:571px;top:383.6px;width:443.5px;height:8.6px;background:#f2f2f2"></div>
<div class="a" style="left:1014.5px;top:383.6px;width:9.5px;height:8.6px;background:#f0f0f0"></div>
<div class="ln st" style="left:573px;top:384.8px">00001C56 sub_804898B:565 (8049C56)</div>
<div class="a" style="left:604.5px;top:384.5px;width:0.8px;height:7.5px;background:#d8d8d8"></div><div class="a" style="left:710px;top:384.5px;width:0.8px;height:7.5px;background:#d8d8d8"></div>
<div class="a" style="left:571px;top:392px;width:453px;height:1px;background:#8fb0d8"></div>
<div class="a" style="left:547px;top:393.6px;width:477px;height:0.9px;background:#d2d2d2"></div>
<div class="a" style="left:547px;top:394.3px;width:422.5px;height:10.7px;background:#f2f2f2;border-bottom:1px solid #dcdcdc"></div>
<svg class="a" style="left:549.5px;top:396.5px" width="6" height="6"><defs><linearGradient id="ig" x1="0" y1="0" x2="1" y2="1"><stop offset="0" stop-color="#6cc8f4"/><stop offset="1" stop-color="#3050c8"/></linearGradient></defs><rect x="0" y="0" width="6" height="6" rx="0.6" fill="url(#ig)"/><rect x="1" y="1.8" width="1.2" height="3.2" fill="#f0ffff"/><rect x="2.8" y="2.2" width="2.4" height="2.8" fill="#c0d8f0"/></svg>
<div class="ln lg" style="left:557px;top:397px;">Hex View-1</div>
<svg class="a" style="left:938px;top:394px" width="32" height="11"><g fill="none" stroke="#3a3a3a" stroke-width="0.8"><rect x="3.9" y="3.4" width="4.8" height="5.6"/><path d="M3.9,3.6H8.7" stroke-width="1.4"/><rect x="14.2" y="4.9" width="3.6" height="3.6"/><path d="M15.6,4.9V3.4H19.3V7H17.8" /><path d="M15.6,3.5H19.3" stroke-width="1.1"/><path d="M24.4,3.9L28,7.8M28,3.9L24.4,7.8" stroke-width="1.05"/></g></svg>
<div class="a" style="left:547px;top:405.5px;width:413px;height:123px;background:#c8ffff"></div>
<div class="a" style="left:960px;top:405.5px;width:9.5px;height:123px;background:#f0f0f0"></div>
<div class="a" style="left:963px;top:415.4px;width:4px;height:9.4px;background:#808080"></div>
<div class="a" style="left:547px;top:439.20px;width:413px;height:8.2px;background:#b0e4e0"></div>
<div class="ln ida" style="left:547.5px;top:407.00px;color:#8c8c8c;font-weight:normal">08048940</div>
<div class="ln ida" style="left:586.62px;top:407.00px;color:#189818;font-weight:bold">7D F0 8B 45 08 83 C0 04</div>
<div class="ln ida" style="left:684.42px;top:407.00px;color:#189818;font-weight:bold">8B 00 89 04 24 E8 2F FE</div>
<div class="ln ida" style="left:782.22px;top:407.00px;color:#1818f0;font-weight:normal">}...........$...</div>
<div class="ln ida" style="left:547.5px;top:415.20px;color:#8c8c8c;font-weight:normal">08048950</div>
<div class="ln ida" style="left:586.62px;top:415.20px;color:#189818;font-weight:bold">FF FF D8 6D F0 DE F1 D9</div>
<div class="ln ida" style="left:684.42px;top:415.20px;color:#189818;font-weight:bold">5D FC D9 45 FC D9 1C 24</div>
<div class="ln ida" style="left:782.22px;top:415.20px;color:#1818f0;font-weight:normal">........]......$</div>
<div class="ln ida" style="left:547.5px;top:423.40px;color:#8c8c8c;font-weight:normal">08048960</div>
<div class="ln ida" style="left:586.62px;top:423.40px;color:#189818;font-weight:bold">E8 33 FE FF FF C9 C3 55</div>
<div class="ln ida" style="left:684.42px;top:423.40px;color:#189818;font-weight:bold">89 E5 83 EC 10 A1 C0 C0</div>
<div class="ln ida" style="left:782.22px;top:423.40px;color:#1818f0;font-weight:normal">........U.......</div>
<div class="ln ida" style="left:547.5px;top:431.60px;color:#8c8c8c;font-weight:normal">08048970</div>
<div class="ln ida" style="left:586.62px;top:431.60px;color:#189818;font-weight:bold">06 08 89 45 FC 8B 45 08</div>
<div class="ln ida" style="left:684.42px;top:431.60px;color:#189818;font-weight:bold">8B 10 A1 C0 C0 06 08 01</div>
<div class="ln ida" style="left:782.22px;top:431.60px;color:#1818f0;font-weight:normal">...E..E.........</div>
<div class="ln ida" style="left:547.5px;top:439.80px;color:#0000e0;font-weight:bold">08048980</div>
<div class="ln ida" style="left:586.62px;top:439.80px;color:#189818;font-weight:bold">D0 A3 C0 C0 06 08 8B 45</div>
<div class="ln ida" style="left:684.42px;top:439.80px;color:#189818;font-weight:bold">FC C9 C3 55 89 E5 81 EC</div>
<div class="ln ida" style="left:782.22px;top:439.80px;color:#1818f0;font-weight:normal">y......E...U....</div>
<div class="ln ida" style="left:547.5px;top:448.00px;color:#8c8c8c;font-weight:normal">08048990</div>
<div class="ln ida" style="left:586.62px;top:448.00px;color:#189818;font-weight:bold">C8 00 00 00 C7 45 CC 00</div>
<div class="ln ida" style="left:684.42px;top:448.00px;color:#189818;font-weight:bold">10 00 00 83 7D 08 00 74</div>
<div class="ln ida" style="left:782.22px;top:448.00px;color:#1818f0;font-weight:normal">............}..t</div>
<div class="ln ida" style="left:547.5px;top:456.20px;color:#8c8c8c;font-weight:normal">080489A0</div>
<div class="ln ida" style="left:586.62px;top:456.20px;color:#189818;font-weight:bold">2A C7 45 D0 00 00 00 00</div>
<div class="ln ida" style="left:684.42px;top:456.20px;color:#189818;font-weight:bold">EB 19 8B 45 D0 C1 E0 02</div>
<div class="ln ida" style="left:782.22px;top:456.20px;color:#1818f0;font-weight:normal">*..........E....</div>
<div class="ln ida" style="left:547.5px;top:464.40px;color:#8c8c8c;font-weight:normal">080489B0</div>
<div class="ln ida" style="left:586.62px;top:464.40px;color:#189818;font-weight:bold">03 45 08 8B 10 8B 45 D0</div>
<div class="ln ida" style="left:684.42px;top:464.40px;color:#189818;font-weight:bold">89 94 85 4C FF FF FF 83</div>
<div class="ln ida" style="left:782.22px;top:464.40px;color:#1818f0;font-weight:normal">.E....E....L....</div>
<div class="ln ida" style="left:547.5px;top:472.60px;color:#8c8c8c;font-weight:normal">080489C0</div>
<div class="ln ida" style="left:586.62px;top:472.60px;color:#189818;font-weight:bold">45 D0 01 83 7D D0 1E 7E</div>
<div class="ln ida" style="left:684.42px;top:472.60px;color:#189818;font-weight:bold">E1 EB 21 C7 45 D4 00 00</div>
<div class="ln ida" style="left:782.22px;top:472.60px;color:#1818f0;font-weight:normal">E...}..~........</div>
<div class="ln ida" style="left:547.5px;top:480.80px;color:#8c8c8c;font-weight:normal">080489D0</div>
<div class="ln ida" style="left:586.62px;top:480.80px;color:#189818;font-weight:bold">00 00 EB 12 8B 45 D4 C7</div>
<div class="ln ida" style="left:684.42px;top:480.80px;color:#189818;font-weight:bold">84 85 4C FF FF FF 00 00</div>
<div class="ln ida" style="left:782.22px;top:480.80px;color:#1818f0;font-weight:normal">.....E....L.....</div>
<div class="ln ida" style="left:547.5px;top:489.00px;color:#8c8c8c;font-weight:normal">080489E0</div>
<div class="ln ida" style="left:586.62px;top:489.00px;color:#189818;font-weight:bold">00 00 83 45 D4 01 83 7D</div>
<div class="ln ida" style="left:684.42px;top:489.00px;color:#189818;font-weight:bold">D4 1E 7E E8 C7 45 C8 00</div>
<div class="ln ida" style="left:782.22px;top:489.00px;color:#1818f0;font-weight:normal">...E...}..~.....</div>
<div class="ln ida" style="left:547.5px;top:497.20px;color:#8c8c8c;font-weight:normal">080489F0</div>
<div class="ln ida" style="left:586.62px;top:497.20px;color:#189818;font-weight:bold">F0 00 00 C7 45 D8 00 00</div>
<div class="ln ida" style="left:684.42px;top:497.20px;color:#189818;font-weight:bold">00 00 C7 45 EC 00 00 00</div>
<div class="ln ida" style="left:782.22px;top:497.20px;color:#1818f0;font-weight:normal">....E...........</div>
<div class="ln ida" style="left:547.5px;top:505.40px;color:#8c8c8c;font-weight:normal">08048A00</div>
<div class="ln ida" style="left:586.62px;top:505.40px;color:#189818;font-weight:bold">00 C7 45 F0 00 00 00 00</div>
<div class="ln ida" style="left:684.42px;top:505.40px;color:#189818;font-weight:bold">C7 45 F4 00 00 00 00 C7</div>
<div class="ln ida" style="left:782.22px;top:505.40px;color:#1818f0;font-weight:normal">................</div>
<div class="ln ida" style="left:547.5px;top:513.60px;color:#8c8c8c;font-weight:normal">08048A10</div>
<div class="ln ida" style="left:586.62px;top:513.60px;color:#189818;font-weight:bold">45 E8 00 00 00 00 8B 45</div>
<div class="ln ida" style="left:684.42px;top:513.60px;color:#189818;font-weight:bold">E8 89 45 E4 8B 45 E4 89</div>
<div class="ln ida" style="left:782.22px;top:513.60px;color:#1818f0;font-weight:normal">E......E........</div>
<div class="ln ida" style="left:547.5px;top:521.80px;color:#8c8c8c;font-weight:normal">08048A20</div>
<div class="ln ida" style="left:586.62px;top:521.80px;color:#189818;font-weight:bold">45 E0 8B 45 E0 89 45 DC</div>
<div class="ln ida" style="left:684.42px;top:521.80px;color:#189818;font-weight:bold">E9 3A 12 00 00 8B 45 CC</div>
<div class="ln ida" style="left:782.22px;top:521.80px;color:#1818f0;font-weight:normal">E.........:....E</div>
<div class="a" style="left:765.97px;top:431.00px;width:8.4px;height:8.2px;background:#007000"></div>
<div class="ln ida" style="left:766.57px;top:431.60px;color:#ffffff;font-weight:bold">01</div>
<div class="a" style="left:586.02px;top:439.20px;width:8.4px;height:8.2px;background:#007000"></div>
<div class="ln ida" style="left:586.62px;top:439.80px;color:#f0f0d0;font-weight:bold">D0</div>
<div class="a" style="left:547px;top:528.8px;width:423px;height:8.2px;background:#f6f6f6"></div>
<div class="a" style="left:971px;top:528.8px;width:53px;height:8.2px;background:#f6f6f6"></div>
<div class="ln st" style="left:548px;top:530.2px">00000980 08048980: sub_8048967+19</div>
<div class="a" style="left:547px;top:537px;width:477px;height:1px;background:#c8c8c8"></div>
<div class="a" style="left:970px;top:394.3px;width:1px;height:143px;background:#dadada"></div>
<svg class="a" style="left:972.0px;top:396.5px" width="6" height="6"><defs><linearGradient id="ig" x1="0" y1="0" x2="1" y2="1"><stop offset="0" stop-color="#6cc8f4"/><stop offset="1" stop-color="#3050c8"/></linearGradient></defs><rect x="0" y="0" width="6" height="6" rx="0.6" fill="url(#ig)"/><rect x="1" y="1.8" width="1.2" height="3.2" fill="#f0ffff"/><rect x="2.8" y="2.2" width="2.4" height="2.8" fill="#c0d8f0"/></svg>
<div class="ln lg" style="left:981px;top:397px;">Stack view</div>
<div class="a" style="left:971px;top:405.5px;width:53px;height:123px;background:#c8ffff"></div>
<div class="a" style="left:971px;top:406.5px;width:53px;height:7.4px;background:#6ccdf0"></div>
<div class="a" style="left:971px;top:447.2px;width:53px;height:8px;background:#f01010"></div>
<div class="ln ida" style="left:971.5px;top:407.00px;color:#0000f0;font-weight:bold">FFB4F890</div>
<div class="ln ida" style="left:1010.5px;top:407.00px;color:#20a040;font-weight:bold">FFB4F8</div>
<div class="ln ida" style="left:971.5px;top:415.20px;color:#8c8c8c;font-weight:normal">FFB4F894</div>
<div class="ln ida" style="left:1010.5px;top:415.20px;color:#008000;font-weight:bold">000000</div>
<div class="ln ida" style="left:971.5px;top:423.40px;color:#8c8c8c;font-weight:normal">FFB4F898</div>
<div class="ln ida" style="left:1010.5px;top:423.40px;color:#008000;font-weight:bold">000000</div>
<div class="ln ida" style="left:971.5px;top:431.60px;color:#8c8c8c;font-weight:normal">FFB4F89C</div>
<div class="ln ida" style="left:1010.5px;top:431.60px;color:#008000;font-weight:bold">000000</div>
<div class="ln ida" style="left:971.5px;top:439.80px;color:#8c8c8c;font-weight:normal">FFB4F8A0</div>
<div class="ln ida" style="left:1010.5px;top:439.80px;color:#008000;font-weight:bold">000000</div>
<div class="ln ida" style="left:971.5px;top:448.00px;color:#a04848;font-weight:normal">FFB4F8A4</div>
<div class="ln ida" style="left:1010.5px;top:448.00px;color:#008000;font-weight:bold">000000</div>
<div class="ln ida" style="left:971.5px;top:456.20px;color:#8c8c8c;font-weight:normal">FFB4F8A8</div>
<div class="ln ida" style="left:1010.5px;top:456.20px;color:#008000;font-weight:bold">000000</div>
<div class="ln ida" style="left:971.5px;top:464.40px;color:#8c8c8c;font-weight:normal">FFB4F8AC</div>
<div class="ln ida" style="left:1010.5px;top:464.40px;color:#008000;font-weight:bold">000000</div>
<div class="ln ida" style="left:971.5px;top:472.60px;color:#8c8c8c;font-weight:normal">FFB4F8B0</div>
<div class="ln ida" style="left:1010.5px;top:472.60px;color:#008000;font-weight:bold">000000</div>
<div class="ln ida" style="left:971.5px;top:480.80px;color:#8c8c8c;font-weight:normal">FFB4F8B4</div>
<div class="ln ida" style="left:1010.5px;top:480.80px;color:#008000;font-weight:bold">0174CF</div>
<div class="ln ida" style="left:971.5px;top:489.00px;color:#8c8c8c;font-weight:normal">FFB4F8B8</div>
<div class="ln ida" style="left:1010.5px;top:489.00px;color:#008000;font-weight:bold">0174CF</div>
<div class="ln ida" style="left:971.5px;top:497.20px;color:#8c8c8c;font-weight:normal">FFB4F8BC</div>
<div class="ln ida" style="left:1010.5px;top:497.20px;color:#008000;font-weight:bold">000000</div>
<div class="ln ida" style="left:971.5px;top:505.40px;color:#8c8c8c;font-weight:normal">FFB4F8C0</div>
<div class="ln ida" style="left:1010.5px;top:505.40px;color:#008000;font-weight:bold">000000</div>
<div class="ln ida" style="left:971.5px;top:513.60px;color:#8c8c8c;font-weight:normal">FFB4F8C4</div>
<div class="ln ida" style="left:1010.5px;top:513.60px;color:#008000;font-weight:bold">000000</div>
<div class="ln ida" style="left:971.5px;top:521.80px;color:#8c8c8c;font-weight:normal">FFB4F8C8</div>
<div class="ln ida" style="left:1010.5px;top:521.80px;color:#008000;font-weight:bold">000000</div>
<div class="ln st" style="left:972px;top:530.2px">UNKNOWN FFB4F8C8</div>
<div class="a" style="left:547px;top:540px;width:477px;height:9.5px;background:#f0f0f0;border-bottom:1px solid #dcdcdc"></div>
<svg class="a" style="left:549.5px;top:541.5px" width="6" height="6"><defs><linearGradient id="ig" x1="0" y1="0" x2="1" y2="1"><stop offset="0" stop-color="#6cc8f4"/><stop offset="1" stop-color="#3050c8"/></linearGradient></defs><rect x="0" y="0" width="6" height="6" rx="0.6" fill="url(#ig)"/><rect x="1" y="1.8" width="1.2" height="3.2" fill="#f0ffff"/><rect x="2.8" y="2.2" width="2.4" height="2.8" fill="#c0d8f0"/></svg>
<div class="ln lg" style="left:557px;top:542px;">Output</div>
<div class="a" style="left:547px;top:549.8px;width:477px;height:81px;background:#ffffff"></div>
<div class="ln ida" style="left:549.7px;top:552.15px;color:#000;font-weight:normal;-webkit-text-stroke:0.22px #000">F7F14000: loaded /usr/lib32/ld-2.33.so</div>
<div class="ln ida" style="left:549.7px;top:560.42px;color:#000;font-weight:normal;-webkit-text-stroke:0.22px #000">8048000: process /home/kali/Desktop/VMP has started (pid=59406)</div>
<div class="ln ida" style="left:549.7px;top:568.69px;color:#000;font-weight:normal;-webkit-text-stroke:0.22px #000">F7D05000: loaded /usr/lib32/libc-2.33.so</div>
<div class="ln ida" style="left:549.7px;top:576.96px;color:#000;font-weight:normal;-webkit-text-stroke:0.22px #000">Debugger: process has exited (exit code 9)</div>
<div class="ln ida" style="left:549.7px;top:585.23px;color:#000;font-weight:normal;-webkit-text-stroke:0.22px #000">Found a valid interpeter in /usr/lib32/ld-2.33.so, will report shared library events!</div>
<div class="ln ida" style="left:549.7px;top:593.50px;color:#000;font-weight:normal;-webkit-text-stroke:0.22px #000">F7F6F000: loaded [vdso]</div>
<div class="ln ida" style="left:549.7px;top:601.77px;color:#000;font-weight:normal;-webkit-text-stroke:0.22px #000">F7F71000: loaded /usr/lib32/ld-2.33.so</div>
<div class="ln ida" style="left:549.7px;top:610.04px;color:#000;font-weight:normal;-webkit-text-stroke:0.22px #000">8048000: process /home/kali/Desktop/VMP has started (pid=63971)</div>
<div class="ln ida" style="left:549.7px;top:618.31px;color:#000;font-weight:normal;-webkit-text-stroke:0.22px #000">F7D62000: loaded /usr/lib32/libc-2.33.so</div>
<div class="ln ida" style="left:549.7px;top:626.58px;color:#000;font-weight:normal;-webkit-text-stroke:0.22px #000">Debugger: process has exited (exit code 9)</div>
</body></html>
